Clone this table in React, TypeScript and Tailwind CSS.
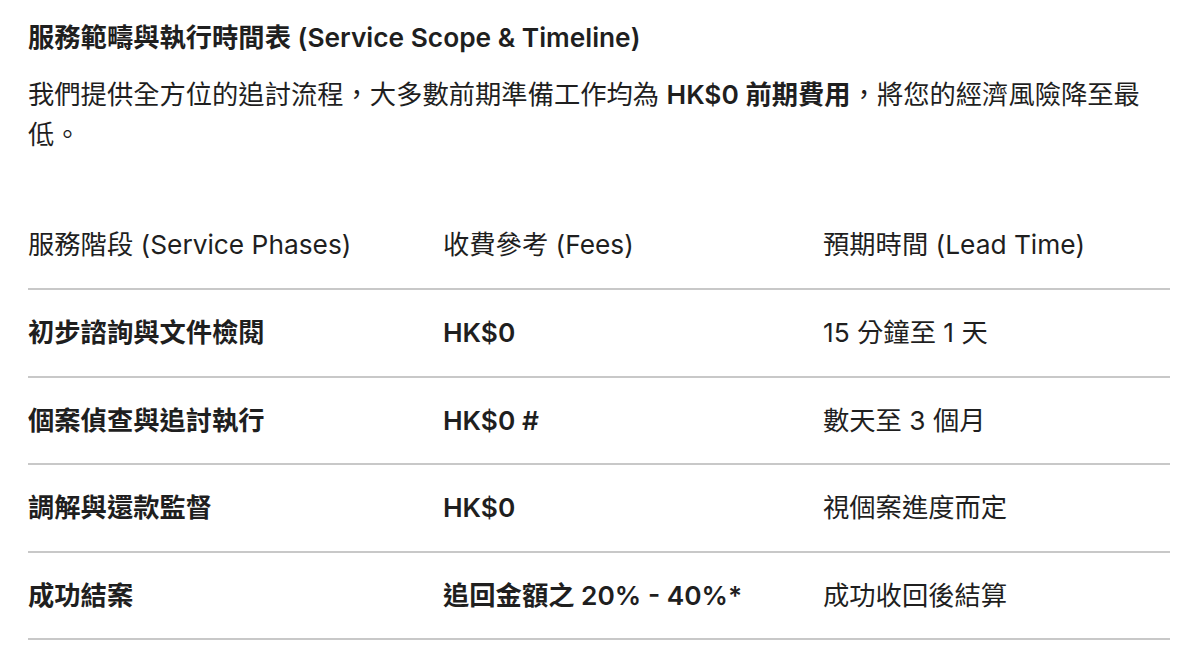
import React from "react";

const rows = [
  ["初步諮詢與文件檢閱", "HK$0", "15 分鐘至 1 天"],
  ["個案偵查與追討執行", "HK$0 #", "數天至 3 個月"],
  ["調解與還款監督", "HK$0", "視個案進度而定"],
  ["成功結案", "追回金額之 20% - 40%*", "成功收回後結算"],
];

export default function App() {
  return (
    <div
      className="w-[1200px] h-[659px] bg-white text-[#1f1f1f] overflow-hidden"
      style={{ fontFamily: '"Inter", "Noto Sans CJK TC", sans-serif' }}
    >
      <div className="pl-[28px] pr-[30px]">
        <h2 className="pt-[22px] text-[26.3px] leading-[32px] font-semibold">
          服務範疇與執行時間表 (Service Scope &amp; Timeline)
        </h2>
        <p className="mt-[21px] text-[26.3px] leading-[40px]">
          我們提供全方位的追討流程，大多數前期準備工作均為 <b className="font-semibold">HK$0 前期費用</b>，將您的經濟風險降至最低。
        </p>
        <div className="mt-[47px] text-[26.3px]">
          <div className="grid grid-cols-[415px_380px_1fr] h-[88px] items-center border-b-2 border-[#c8c8c8]">
            <div>服務階段 (Service Phases)</div>
            <div>收費參考 (Fees)</div>
            <div>預期時間 (Lead Time)</div>
          </div>
          {rows.map((r, i) => (
            <div
              key={i}
              className="grid grid-cols-[415px_380px_1fr] h-[87.5px] items-center border-b-2 border-[#c8c8c8]"
            >
              <div className="font-semibold">{r[0]}</div>
              <div className="font-semibold">{r[1]}</div>
              <div>{r[2]}</div>
            </div>
          ))}
        </div>
      </div>
    </div>
  );
}
